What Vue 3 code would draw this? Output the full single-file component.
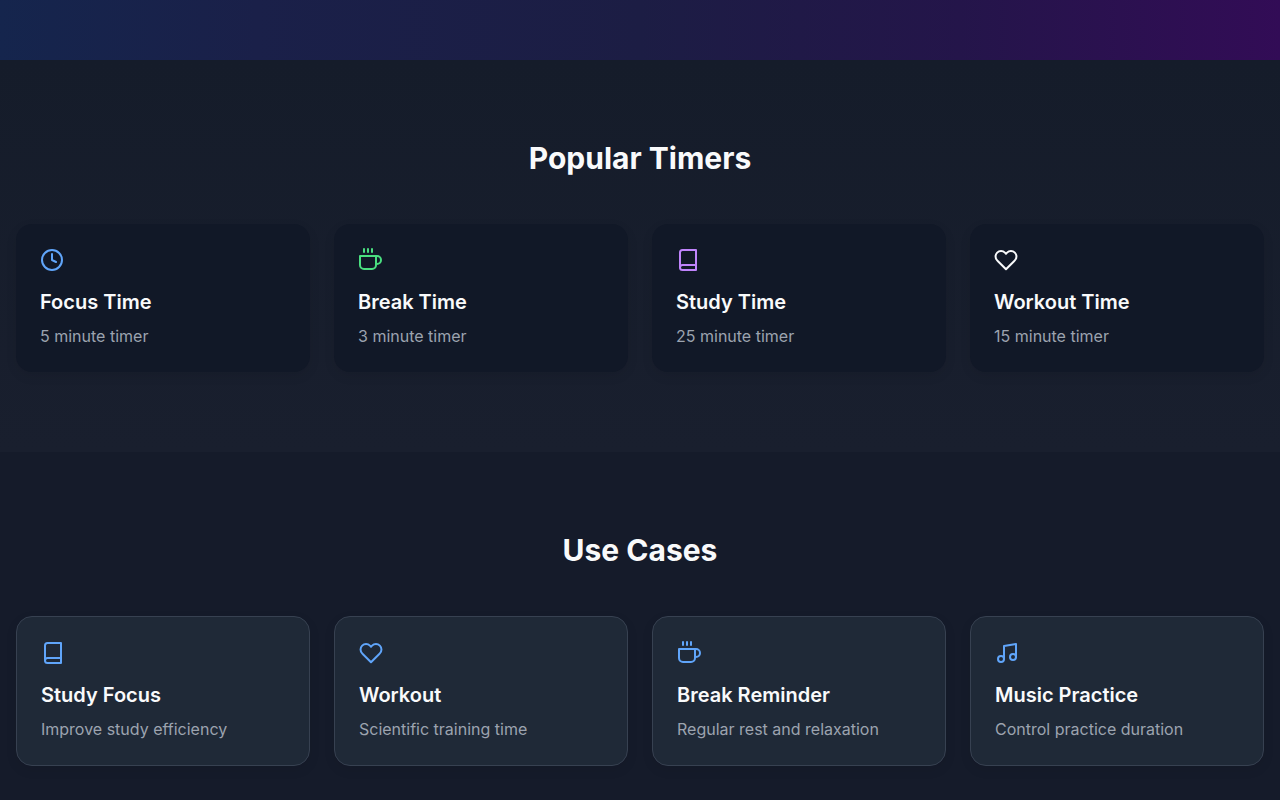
<script setup>
const icons = {
  clock: ['M12 2a10 10 0 1 0 0 20 10 10 0 0 0 0-20z', 'M12 6v6l4 2'],
  coffee: [
    'M18 8h1a4 4 0 0 1 0 8h-1',
    'M2 8h16v9a4 4 0 0 1-4 4H6a4 4 0 0 1-4-4V8z',
    'M6 1v3',
    'M10 1v3',
    'M14 1v3',
  ],
  book: [
    'M4 19.5A2.5 2.5 0 0 1 6.5 17H20',
    'M6.5 2H20v20H6.5A2.5 2.5 0 0 1 4 19.5v-15A2.5 2.5 0 0 1 6.5 2z',
  ],
  heart: [
    'M20.84 4.61a5.5 5.5 0 0 0-7.78 0L12 5.67l-1.06-1.06a5.5 5.5 0 0 0-7.78 7.78l1.06 1.06L12 21.23l7.78-7.78 1.06-1.06a5.5 5.5 0 0 0 0-7.78z',
  ],
  music: [
    'M9 18V5l12-2v13',
    'M6 15a3 3 0 1 0 0 6 3 3 0 0 0 0-6z',
    'M18 13a3 3 0 1 0 0 6 3 3 0 0 0 0-6z',
  ],
};

const timers = [
  { icon: 'clock', color: 'blue', title: 'Focus Time', minutes: 5 },
  { icon: 'coffee', color: 'green', title: 'Break Time', minutes: 3 },
  { icon: 'book', color: 'purple', title: 'Study Time', minutes: 25 },
  { icon: 'heart', color: 'white', title: 'Workout Time', minutes: 15 },
];

const useCases = [
  { icon: 'book', title: 'Study Focus', text: 'Improve study efficiency' },
  { icon: 'heart', title: 'Workout', text: 'Scientific training time' },
  { icon: 'coffee', title: 'Break Reminder', text: 'Regular rest and relaxation' },
  { icon: 'music', title: 'Music Practice', text: 'Control practice duration' },
];
</script>

<template>
  <main class="page">
    <div class="hero-end"></div>

    <section class="section popular">
      <h2>Popular Timers</h2>
      <div class="grid">
        <a v-for="timer in timers" :key="timer.title" href="#" class="card timer-card">
          <svg class="icon" :class="timer.color" viewBox="0 0 24 24" aria-hidden="true">
            <path v-for="d in icons[timer.icon]" :key="d" :d="d" />
          </svg>
          <h3>{{ timer.title }}</h3>
          <p>{{ timer.minutes }} minute timer</p>
        </a>
      </div>
    </section>

    <section class="section">
      <h2>Use Cases</h2>
      <div class="grid">
        <div v-for="item in useCases" :key="item.title" class="card case-card">
          <svg class="icon blue" viewBox="0 0 24 24" aria-hidden="true">
            <path v-for="d in icons[item.icon]" :key="d" :d="d" />
          </svg>
          <h3>{{ item.title }}</h3>
          <p>{{ item.text }}</p>
        </div>
      </div>
    </section>
  </main>
</template>

<style>
body {
  margin: 0;
  background: #151b2a;
}
</style>

<style scoped>
.page {
  font-family: Inter, 'Liberation Sans', sans-serif;
  font-size: 16px;
  line-height: 24px;
  color: #f9fafb;
}

/* bottom of the hero */
.hero-end {
  height: 60px;
  background: linear-gradient(to right, #15254d, #1a2049 20%, #1c1d44 50%, #24154a 75%, #320c56);
}

.section {
  padding: 80px 16px;
  background: #151b2a;
}

.section:last-child {
  padding-bottom: 32px;
}

.popular {
  background: linear-gradient(to bottom, #151c2a, #191f2e);
}

h2 {
  margin: 0 0 48px;
  font-size: 30px;
  line-height: 36px;
  font-weight: 700;
  text-align: center;
}

.grid {
  display: grid;
  grid-template-columns: repeat(4, 1fr);
  gap: 24px;
}

.card {
  padding: 24px;
  border-radius: 16px;
  color: inherit;
  text-decoration: none;
}

.timer-card {
  background: #111827;
  box-shadow: 0 4px 12px rgba(0, 0, 0, 0.08);
}

.case-card {
  background: #1f2937;
  border: 1px solid #374151;
  box-shadow: 0 4px 12px rgba(0, 0, 0, 0.08);
}

.icon {
  display: block;
  width: 24px;
  height: 24px;
  margin-bottom: 16px;
  fill: none;
  stroke: currentColor;
  stroke-width: 2;
  stroke-linecap: round;
  stroke-linejoin: round;
}

.blue {
  color: #60a5fa;
}

.green {
  color: #4ade80;
}

.purple {
  color: #c084fc;
}

.white {
  color: #f9fafb;
}

h3 {
  margin: 0 0 8px;
  font-size: 20px;
  line-height: 28px;
  font-weight: 600;
}

p {
  margin: 0;
  color: #9ca3af;
}

@media (max-width: 900px) {
  .grid {
    grid-template-columns: repeat(2, 1fr);
  }
}
</style>
